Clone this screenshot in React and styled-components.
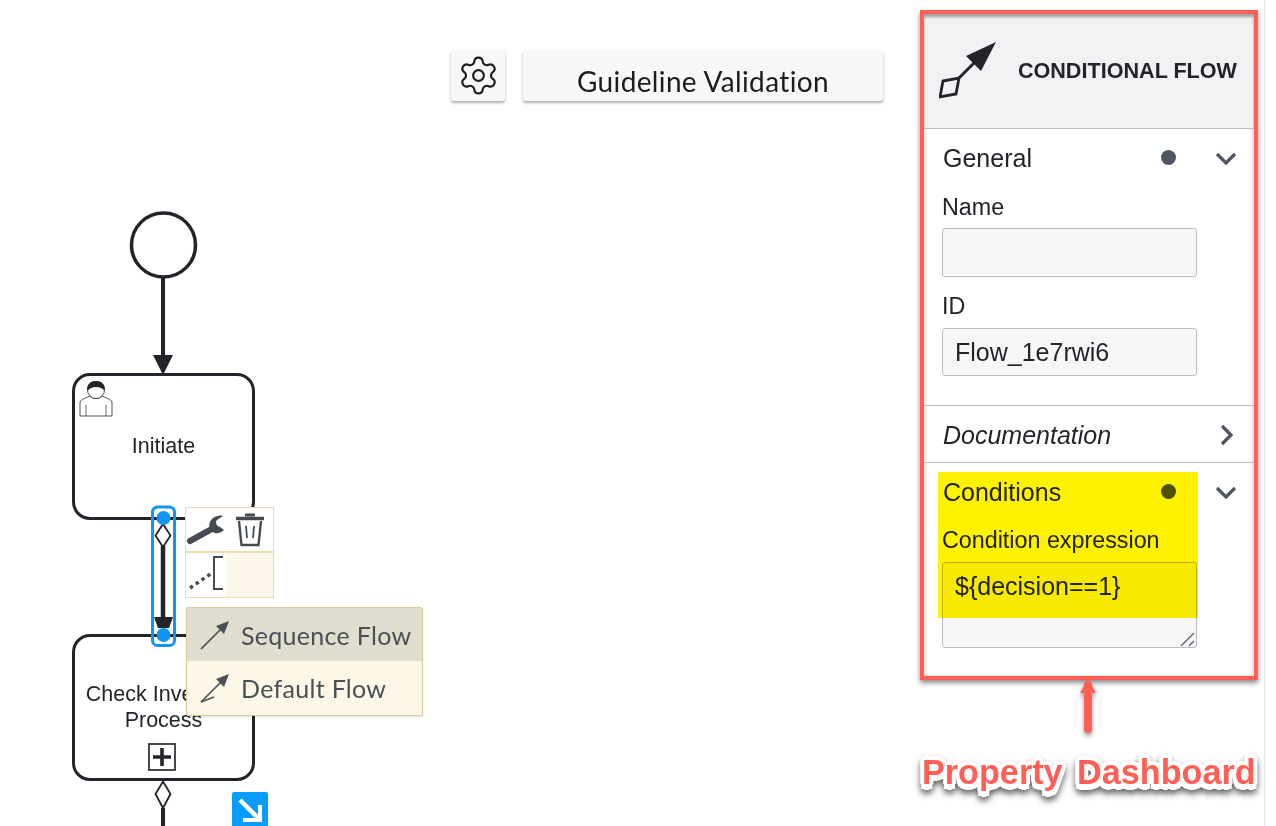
import styled, { createGlobalStyle } from "styled-components";
import { Settings } from "lucide-react";

const INK = "#22242a";
const BLUE = "#0f96f5";
const RED = "#ff5f55";

const GlobalStyle = createGlobalStyle`
  html, body {
    margin: 0;
    background: #fff;
    overflow: hidden;
  }
  body {
    font-family: "Liberation Sans", Arial, sans-serif;
    color: ${INK};
  }
`;

const Page = styled.div`
  display: flex;
  width: 1276px;
  height: 826px;
  overflow: hidden;
`;

const Canvas = styled.main`
  position: relative;
  flex: 0 0 920px;
  height: 826px;
`;

const Toolbar = styled.div`
  display: flex;
  gap: 18px;
  padding: 50px 0 0 451px;
`;

const ToolButton = styled.button`
  height: 51px;
  width: ${(p) => p.$width}px;
  padding: 11px 0 0;
  border: 0;
  border-radius: 3px;
  background: #f8f8f8;
  box-shadow: 0 2px 3px rgba(0, 0, 0, 0.32);
  color: #1c1c1c;
  font-family: Lato, sans-serif;
  font-size: 28px;
  letter-spacing: 0.36px;
  display: flex;
  align-items: center;
  justify-content: center;
`;

const GearButton = styled(ToolButton)`
  padding: 0;
`;

const Edges = styled.svg`
  position: absolute;
  left: 0;
  top: 0;
`;

const Task = styled.div`
  position: absolute;
  left: 72px;
  top: ${(p) => p.$top}px;
  width: 183px;
  height: 147px;
  box-sizing: border-box;
  border: 3.6px solid ${INK};
  border-radius: 18px;
  background: #fff;
  font-size: 21.5px;
  line-height: 26px;
  text-align: center;
`;

const TaskLabel = styled.div`
  padding-top: ${(p) => p.$top}px;
`;

const UserIcon = styled.svg`
  position: absolute;
  left: 4px;
  top: 4px;
`;

const PlusMarker = styled.svg`
  position: absolute;
  left: 73px;
  top: 106px;
`;

const Overlay = styled.svg`
  position: absolute;
  left: 0;
  top: 0;
`;

const Palette = styled.div`
  position: absolute;
  left: 185px;
  top: 507px;
  display: grid;
  grid-template-columns: 40px 47px;
  grid-template-rows: 45px 44px;
  width: 89px;
  box-sizing: border-box;
  border: 1px solid #ecdcb6;
  background: #fdf8ea;
`;

const PaletteCell = styled.div`
  display: flex;
  align-items: center;
  justify-content: ${(p) => (p.$center ? "center" : "flex-start")};
  background: ${(p) => (p.$light ? "#fff" : "transparent")};
  border-bottom: ${(p) => (p.$line ? "2px solid #ecdcb6" : "0")};
`;

const FlowMenu = styled.div`
  position: absolute;
  left: 186px;
  top: 607px;
  width: 237px;
  box-sizing: border-box;
  border: 1px solid #dcc99c;
  border-radius: 2px;
  background: #fdf7e8;
  box-shadow: 0 1px 2px rgba(0, 0, 0, 0.12);
`;

const FlowOption = styled.div`
  display: flex;
  align-items: center;
  gap: 11px;
  height: ${(p) => (p.$active ? 53 : 54)}px;
  padding-left: 13px;
  background: ${(p) => (p.$active ? "#e1ddcf" : "transparent")};
  color: #4a5056;
  font-family: Lato, sans-serif;
  font-size: 25px;
  letter-spacing: 0.3px;
`;

const GoToBadge = styled.div`
  position: absolute;
  left: 232px;
  top: 792px;
  width: 36px;
  height: 40px;
  border-radius: 2px;
  background: #0a9bff;
`;

const Side = styled.aside`
  flex: 0 0 345px;
  height: 826px;
  box-sizing: border-box;
  padding-top: 10px;
  border-right: 1px solid #e6e6e6;
`;

const Panel = styled.section`
  position: relative;
  width: 338px;
  box-sizing: border-box;
  border: 4px solid ${RED};
  background: #fff;
  box-shadow: 0 3px 5px rgba(0, 0, 0, 0.45), inset 2px 0 3px rgba(0, 0, 0, 0.12),
    inset -2px 0 3px rgba(0, 0, 0, 0.12);
`;

const PanelHeader = styled.header`
  display: flex;
  align-items: center;
  height: 115px;
  box-sizing: border-box;
  padding: 0 17px 0 15px;
  background: #f1f2f4;
  border-bottom: 1px solid #b9bcc6;
  box-shadow: inset 0 3px 3px rgba(0, 0, 0, 0.35);
  justify-content: space-between;
`;

const PanelTitle = styled.h2`
  margin: 0;
  font-size: 21.6px;
  font-weight: 700;
  white-space: nowrap;
`;

const Group = styled.div`
  padding: ${(p) => p.$pad};
  border-bottom: ${(p) => (p.$last ? "0" : "1px solid #b9bcc6")};
`;

const GroupRow = styled.div`
  display: flex;
  align-items: center;
  height: 30px;
  padding: 0 17px 0 19px;
`;

const GroupName = styled.span`
  flex: 1;
  font-size: 25px;
  font-style: ${(p) => (p.$italic ? "italic" : "normal")};
`;

const Dot = styled.span`
  width: 15px;
  height: 15px;
  margin: -2px 39px 0 0;
  border-radius: 50%;
  background: #4f5563;
`;

const Field = styled.div`
  position: relative;
  padding: 0 0 0 18px;
`;

const FieldLabel = styled.label`
  display: block;
  margin: ${(p) => p.$top}px 0 ${(p) => p.$bottom}px;
  font-size: 23.3px;
  line-height: 28px;
`;

const TextInput = styled.input`
  display: block;
  width: 255px;
  height: ${(p) => p.$height}px;
  box-sizing: border-box;
  padding: 0 12px;
  border: 1px solid #b9bcc6;
  border-radius: 3px;
  background: #f7f7f8;
  color: ${INK};
  font: 25px "Liberation Sans", Arial, sans-serif;
`;

const TextArea = styled.textarea`
  display: block;
  width: 255px;
  height: 86px;
  box-sizing: border-box;
  padding: 8px 12px;
  border: 1px solid #b9bcc6;
  border-radius: 3px;
  background: #f7f7f8;
  color: ${INK};
  font: 25px/30px "Liberation Sans", Arial, sans-serif;
  resize: none;
`;

const Grip = styled.svg`
  position: absolute;
  left: 256px;
  bottom: 1px;
`;

const Highlight = styled.div`
  position: absolute;
  left: 14px;
  top: 458px;
  width: 260px;
  height: 146px;
  background: #fff200;
  mix-blend-mode: multiply;
  pointer-events: none;
`;

const Pointer = styled.svg`
  display: block;
  margin: -3px 0 0 160px;
  filter: drop-shadow(0 3px 2px rgba(0, 0, 0, 0.4));
`;

const Callout = styled.div`
  margin: 19px 0 0 2px;
  color: ${RED};
  font-size: 34.2px;
  font-weight: 700;
  line-height: 40px;
  word-spacing: 5px;
  white-space: nowrap;
  text-shadow: 4px 0 0 #fff, -4px 0 0 #fff, 0 4px 0 #fff, 0 -4px 0 #fff,
    3px 3px 0 #fff, -3px 3px 0 #fff, 3px -3px 0 #fff, -3px -3px 0 #fff,
    0 6px 0 #fff, 3px 5px 0 #fff, -3px 5px 0 #fff;
  filter: drop-shadow(0 4px 3px rgba(0, 0, 0, 0.6));
`;

function Chevron({ right }) {
  return (
    <svg width="22" height="22" viewBox="0 0 22 22" fill="none">
      <path
        d={right ? "M7 2l9 9-9 9" : "M2 7l9 9 9-9"}
        stroke="#4f5563"
        strokeWidth="3.2"
      />
    </svg>
  );
}

function SequenceIcon({ crossed }) {
  return (
    <svg width="30" height="30" viewBox="0 0 30 30" fill="none">
      <path d="M1 29L21 9" stroke="#4a5056" strokeWidth="1.7" />
      <path d="M29 1L16 6l8 8z" fill="#4a5056" />
      {crossed && <path d="M1 29l13-5" stroke="#4a5056" strokeWidth="1.4" />}
    </svg>
  );
}

function Diagram() {
  return (
    <Edges width="920" height="826" viewBox="0 0 920 826" fill="none">
      <circle cx="163.5" cy="245" r="32" stroke={INK} strokeWidth="3.5" />
      <path d="M163 277v80" stroke={INK} strokeWidth="4" />
      <path d="M153 355h20l-10 20z" fill={INK} />
      <path d="M163 808v18" stroke={INK} strokeWidth="4" />
    </Edges>
  );
}

function Selection() {
  return (
    <Overlay width="920" height="826" viewBox="0 0 920 826" fill="none">
      <path d="M163 546v72" stroke={INK} strokeWidth="4.5" />
      <path d="M163 524l7.5 11.5L163 547l-7.5-11.5z" fill="#fff" stroke={INK} strokeWidth="1.8" />
      <path d="M154 617h19l-4 11h-11z" fill={INK} />
      <rect x="152.5" y="507" width="22" height="138.5" rx="5" stroke={BLUE} strokeWidth="3" />
      <circle cx="163.5" cy="518" r="7" fill={BLUE} />
      <circle cx="163.5" cy="635" r="7" fill={BLUE} />
      <path d="M163 781.5l7.5 12.5-7.5 14-7.5-14z" fill="#fff" stroke={INK} strokeWidth="1.8" />
    </Overlay>
  );
}

export default function App() {
  return (
    <>
      <GlobalStyle />
      <Page>
        <Canvas>
          <Toolbar>
            <GearButton $width={54}>
              <Settings size={43} strokeWidth={1.2} />
            </GearButton>
            <ToolButton $width={360}>Guideline Validation</ToolButton>
          </Toolbar>

          <Diagram />

          <Task $top={373}>
            <UserIcon width="34" height="38" viewBox="0 0 34 38" fill="none">
              <path
                d="M1 36V23c0-3 3-4 10-7 2 3 10 3 12 0 7 3 10 4 10 7v13z"
                fill="#fff"
                stroke="#3a3d44"
                strokeWidth="0.9"
              />
              <path d="M7 36V25M27 36V25" stroke="#3a3d44" strokeWidth="0.8" />
              <circle cx="17" cy="10" r="8.5" fill="#fff" stroke="#3a3d44" strokeWidth="0.9" />
              <path d="M8.5 11C7 4 12 1 17 1s10 3 8.5 10c-2-3-5-4-8.5-4s-6 1-8.500 4z" fill={INK} />
            </UserIcon>
            <TaskLabel $top={57}>Initiate</TaskLabel>
          </Task>

          <Task $top={634}>
            <TaskLabel $top={44}>
              Check Inventory
              <br />
              Process
            </TaskLabel>
            <PlusMarker width="28" height="28" viewBox="0 0 28 28" fill="none">
              <rect x="1" y="1" width="26" height="26" stroke="#33363c" strokeWidth="1.8" />
              <path d="M14 5v18M5 14h18" stroke={INK} strokeWidth="3.6" />
            </PlusMarker>
          </Task>

          <Selection />

          <Palette>
            <PaletteCell $light $line>
              <svg width="40" height="34" viewBox="0 0 40 34" fill="none">
                <path d="M4 28L24 17" stroke="#454b52" strokeWidth="6" strokeLinecap="round" />
                <path
                  d="M38 17c-4 4-10 4-13 1-3-4-2-10 2-13 3-2 7-3 10-2l-6 4c-2 2-1 6 3 7z"
                  fill="#454b52"
                />
              </svg>
            </PaletteCell>
            <PaletteCell $light $line $center>
              <svg width="30" height="34" viewBox="0 0 30 34" fill="none">
                <path d="M1 5.500h28" stroke="#454b52" strokeWidth="3.5" />
                <path d="M10 2h10" stroke="#454b52" strokeWidth="3" />
                <path d="M4 8l2.500 24h17L26 8" stroke="#454b52" strokeWidth="2.4" />
                <path d="M11 13l1 12M19 13l-1 12" stroke="#454b52" strokeWidth="1.8" />
              </svg>
            </PaletteCell>
            <PaletteCell $light>
              <svg width="40" height="40" viewBox="0 0 40 40" fill="none">
                <path d="M4 33L26 18" stroke="#454b52" strokeWidth="3.5" strokeDasharray="3.500 3.500" />
                <path d="M37 2H28v32h9" stroke="#454b52" strokeWidth="2" />
              </svg>
            </PaletteCell>
            <PaletteCell />
          </Palette>

          <FlowMenu>
            <FlowOption $active>
              <SequenceIcon />
              Sequence Flow
            </FlowOption>
            <FlowOption>
              <SequenceIcon crossed />
              Default Flow
            </FlowOption>
          </FlowMenu>

          <GoToBadge>
            <svg width="36" height="36" viewBox="0 0 36 36" fill="none">
              <path d="M8 8l18 18" stroke="#fff" strokeWidth="4.500" />
              <path d="M28 13v15H11" stroke="#fff" strokeWidth="4" />
            </svg>
          </GoToBadge>
        </Canvas>

        <Side>
          <Panel>
            <PanelHeader>
              <svg width="60" height="60" viewBox="0 0 60 60" fill="none">
                <path d="M1 56l3-16 16-3-3 16z" stroke={INK} strokeWidth="2.800" />
                <path d="M20 37l18-18" stroke={INK} strokeWidth="3" />
                <path d="M57 1L27 15l15 15z" fill={INK} />
              </svg>
              <PanelTitle>CONDITIONAL FLOW</PanelTitle>
            </PanelHeader>

            <Group $pad="14px 0 29px">
              <GroupRow>
                <GroupName>General</GroupName>
                <Dot />
                <Chevron />
              </GroupRow>
              <Field>
                <FieldLabel $top={20} $bottom={7}>Name</FieldLabel>
                <TextInput $height={49} readOnly value="" />
                <FieldLabel $top={15} $bottom={8}>ID</FieldLabel>
                <TextInput $height={48} readOnly value="Flow_1e7rwi6" />
              </Field>
            </Group>

            <Group $pad="14px 0 12px">
              <GroupRow>
                <GroupName $italic>Documentation</GroupName>
                <Chevron right />
              </GroupRow>
            </Group>

            <Group $last $pad="14px 0 28px">
              <GroupRow>
                <GroupName>Conditions</GroupName>
                <Dot />
                <Chevron />
              </GroupRow>
              <Field>
                <FieldLabel $top={19} $bottom={8}>Condition expression</FieldLabel>
                <TextArea readOnly value="${decision==1}" />
                <Grip width="16" height="16" viewBox="0 0 16 16" fill="none">
                  <path d="M1 15L14 2M9 15l5-5" stroke="#55585e" strokeWidth="1.200" />
                </Grip>
              </Field>
            </Group>

            <Highlight />
          </Panel>

          <Pointer width="16" height="56" viewBox="0 0 16 56" fill="none">
            <path d="M8 8v44" stroke={RED} strokeWidth="8" strokeLinecap="round" />
            <path d="M8 1l8 15H0z" fill={RED} />
          </Pointer>

          <Callout>Property Dashboard</Callout>
        </Side>
      </Page>
    </>
  );
}
